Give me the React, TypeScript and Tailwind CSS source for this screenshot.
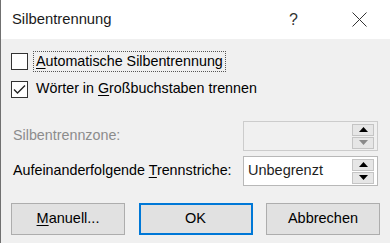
const font = { fontFamily: '"Segoe UI", "Liberation Sans", Arial, sans-serif' };

function SpinButton({ dir, disabled }: { dir: 'up' | 'down'; disabled?: boolean }) {
  return (
    <div className="flex h-[12px] w-[22px] items-center justify-center border border-[#c4c4c4] bg-[#e6e6e6]">
      <svg width="9" height="5" viewBox="0 0 9 5">
        {dir === 'up' ? (
          <polygon points="0,5 9,5 4.5,0" fill={disabled ? '#8a8a8a' : '#000'} />
        ) : (
          <polygon points="0,0 9,0 4.5,5" fill={disabled ? '#8a8a8a' : '#000'} />
        )}
      </svg>
    </div>
  );
}

function SpinBox({ value, disabled }: { value?: string; disabled?: boolean }) {
  return (
    <div
      className={`flex h-[30px] w-[135px] items-center justify-between border pl-[4px] pr-[3px] ${
        disabled ? 'border-[#cccccc] bg-[#f0f0f0]' : 'border-[#b8b8b8] bg-white'
      }`}
    >
      <span className="text-[14.5px] text-[#1e1e1e]">{value}</span>
      <div className="flex flex-col gap-px">
        <SpinButton dir="up" />
        <SpinButton dir="down" disabled={disabled} />
      </div>
    </div>
  );
}

export default function App() {
  return (
    <div
      className="flex h-[243px] w-[390px] flex-col border-l border-[#707070] bg-[#f0f0f0] text-[14.3px] text-black"
      style={font}
    >
      <div className="flex h-[39px] shrink-0 items-center bg-white pl-[11px]">
        <span className="text-[14.8px] text-[#1a1a1a]">Silbentrennung</span>
        <span className="ml-auto mr-[54px] text-[16px] text-[#333]">?</span>
        <svg className="mr-[23px]" width="15" height="15" viewBox="0 0 15 15">
          <path d="M0.5 0.5 L14.5 14.5 M14.5 0.5 L0.5 14.5" stroke="#333" strokeWidth="1" fill="none" />
        </svg>
      </div>

      <div className="flex flex-col px-[10px]">
        <div className="mt-[12px] flex h-[20px] items-center">
          <div className="h-[17px] w-[17px] border border-[#333] bg-white" />
          <span className="ml-[5px] border border-dotted border-[#555] px-[2px] leading-[19px]">
            <span className="underline underline-offset-2">A</span>utomatische Silbentrennung
          </span>
        </div>

        <div className="mt-[8px] flex h-[20px] items-center">
          <div className="flex h-[17px] w-[17px] items-center justify-center border border-[#333] bg-white">
            <svg width="13" height="11" viewBox="0 0 13 11">
              <polyline points="1,5.5 4.5,9 12,1.5" fill="none" stroke="#222" strokeWidth="1.3" />
            </svg>
          </div>
          <span className="ml-[8px]">
            Wörter in <span className="underline underline-offset-2">G</span>roßbuchstaben trennen
          </span>
        </div>

        <div className="mt-[22px] flex items-center justify-between pl-[2px] pr-[2px]">
          <span className="text-[#8c8c8c]">Silbentrennzone:</span>
          <SpinBox disabled />
        </div>

        <div className="mt-[5px] flex items-center justify-between pl-[2px] pr-[2px]">
          <span>
            Aufeinanderfolgende <span className="underline underline-offset-2">T</span>rennstriche:
          </span>
          <SpinBox value="Unbegrenzt" />
        </div>

        <div className="mt-[17px] flex items-center justify-between">
          <button className="h-[32px] w-[114px] border border-[#adadad] bg-[#e1e1e1] text-[14.5px]">
            <span className="underline underline-offset-2">M</span>anuell...
          </button>
          <button className="h-[32px] w-[114px] border-2 border-[#0078d7] bg-[#e1e1e1] text-[14.5px]">
            OK
          </button>
          <button className="h-[32px] w-[114px] border border-[#adadad] bg-[#e1e1e1] text-[14.5px]">
            Abbrechen
          </button>
        </div>
      </div>
    </div>
  );
}
